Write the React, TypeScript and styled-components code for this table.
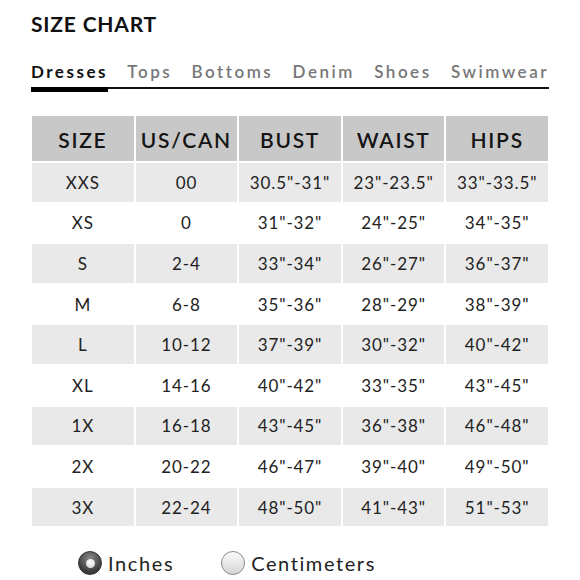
import React from 'react';
import styled, { createGlobalStyle } from 'styled-components';

const GlobalStyle = createGlobalStyle`
  body {
    margin: 0;
    background: #fff;
    font-family: Lato, "Open Sans", Arial, sans-serif;
  }
`;

const Page = styled.div`
  width: 580px;
  height: 580px;
  padding: 12px 32px 0 31px;
  box-sizing: border-box;
  color: #111;
`;

const Title = styled.h1`
  margin: 0;
  font-size: 21px;
  font-weight: 700;
  letter-spacing: 0.8px;
  line-height: 24px;
`;

const Tabs = styled.div`
  margin-top: 25px;
  display: flex;
  justify-content: space-between;
  border-bottom: 2px solid #111;
  width: 518px;
  height: 28px;
  box-sizing: border-box;
`;

const Tab = styled.div<{ $active?: boolean }>`
  font-size: 17px;
  font-weight: ${(p) => (p.$active ? 700 : 600)};
  letter-spacing: 2.5px;
  color: ${(p) => (p.$active ? '#111' : '#777')};
  line-height: 22px;
  position: relative;
  &::after {
    content: '';
    display: ${(p) => (p.$active ? 'block' : 'none')};
    position: absolute;
    left: 0;
    right: 0;
    bottom: -5px;
    height: 5px;
    background: #000;
  }
`;

const Grid = styled.div`
  margin-top: 27px;
  margin-left: 1px;
  width: 516px;
  display: grid;
  grid-template-columns: repeat(5, 1fr);
  grid-template-rows: 45px;
  grid-auto-rows: 38.6px;
  gap: 2px;
`;

const HeadCell = styled.div`
  background: #c8c8c8;
  display: flex;
  align-items: center;
  justify-content: center;
  padding-top: 1px;
  box-sizing: border-box;
  font-size: 21px;
  font-weight: 600;
  letter-spacing: 1.7px;
  color: #151515;
`;

const Cell = styled.div<{ $shaded: boolean }>`
  background: ${(p) => (p.$shaded ? '#e9e9e9' : '#fff')};
  display: flex;
  align-items: center;
  justify-content: center;
  font-size: 17px;
  letter-spacing: 0.9px;
  color: #222;
`;

const Units = styled.div`
  display: flex;
  align-items: center;
  margin-top: 25px;
  padding-left: 47px;
`;

const Option = styled.label`
  display: flex;
  align-items: center;
  font-size: 20px;
  letter-spacing: 1.6px;
  color: #222;
  margin-right: 47px;
`;

const Radio = styled.span<{ $checked?: boolean }>`
  width: 24px;
  height: 24px;
  border-radius: 50%;
  box-sizing: border-box;
  margin-right: 6px;
  display: flex;
  align-items: center;
  justify-content: center;
  border: 1px solid ${(p) => (p.$checked ? '#333' : '#888')};
  background: ${(p) =>
    p.$checked
      ? 'radial-gradient(circle at 50% 30%, #8a8a8a, #3a3a3a 70%)'
      : 'linear-gradient(#fafafa, #d6d6d6)'};
  &::after {
    content: '';
    display: ${(p) => (p.$checked ? 'block' : 'none')};
    width: 9px;
    height: 9px;
    border-radius: 50%;
    background: radial-gradient(circle at 50% 35%, #fff, #ccc);
  }
`;

const tabs = ['Dresses', 'Tops', 'Bottoms', 'Denim', 'Shoes', 'Swimwear'];

const headers = ['SIZE', 'US/CAN', 'BUST', 'WAIST', 'HIPS'];

const rows = [
  ['XXS', '00', '30.5"-31"', '23"-23.5"', '33"-33.5"'],
  ['XS', '0', '31"-32"', '24"-25"', '34"-35"'],
  ['S', '2-4', '33"-34"', '26"-27"', '36"-37"'],
  ['M', '6-8', '35"-36"', '28"-29"', '38"-39"'],
  ['L', '10-12', '37"-39"', '30"-32"', '40"-42"'],
  ['XL', '14-16', '40"-42"', '33"-35"', '43"-45"'],
  ['1X', '16-18', '43"-45"', '36"-38"', '46"-48"'],
  ['2X', '20-22', '46"-47"', '39"-40"', '49"-50"'],
  ['3X', '22-24', '48"-50"', '41"-43"', '51"-53"'],
];

export default function App() {
  return (
    <Page>
      <GlobalStyle />
      <Title>SIZE CHART</Title>
      <Tabs>
        {tabs.map((t, i) => (
          <Tab key={t} $active={i === 0}>
            {t}
          </Tab>
        ))}
      </Tabs>
      <Grid>
        {headers.map((h) => (
          <HeadCell key={h}>{h}</HeadCell>
        ))}
        {rows.map((r, i) =>
          r.map((v, j) => (
            <Cell key={`${i}-${j}`} $shaded={i % 2 === 0}>
              {v}
            </Cell>
          ))
        )}
      </Grid>
      <Units>
        <Option>
          <Radio $checked />
          Inches
        </Option>
        <Option>
          <Radio />
          Centimeters
        </Option>
      </Units>
    </Page>
  );
}
